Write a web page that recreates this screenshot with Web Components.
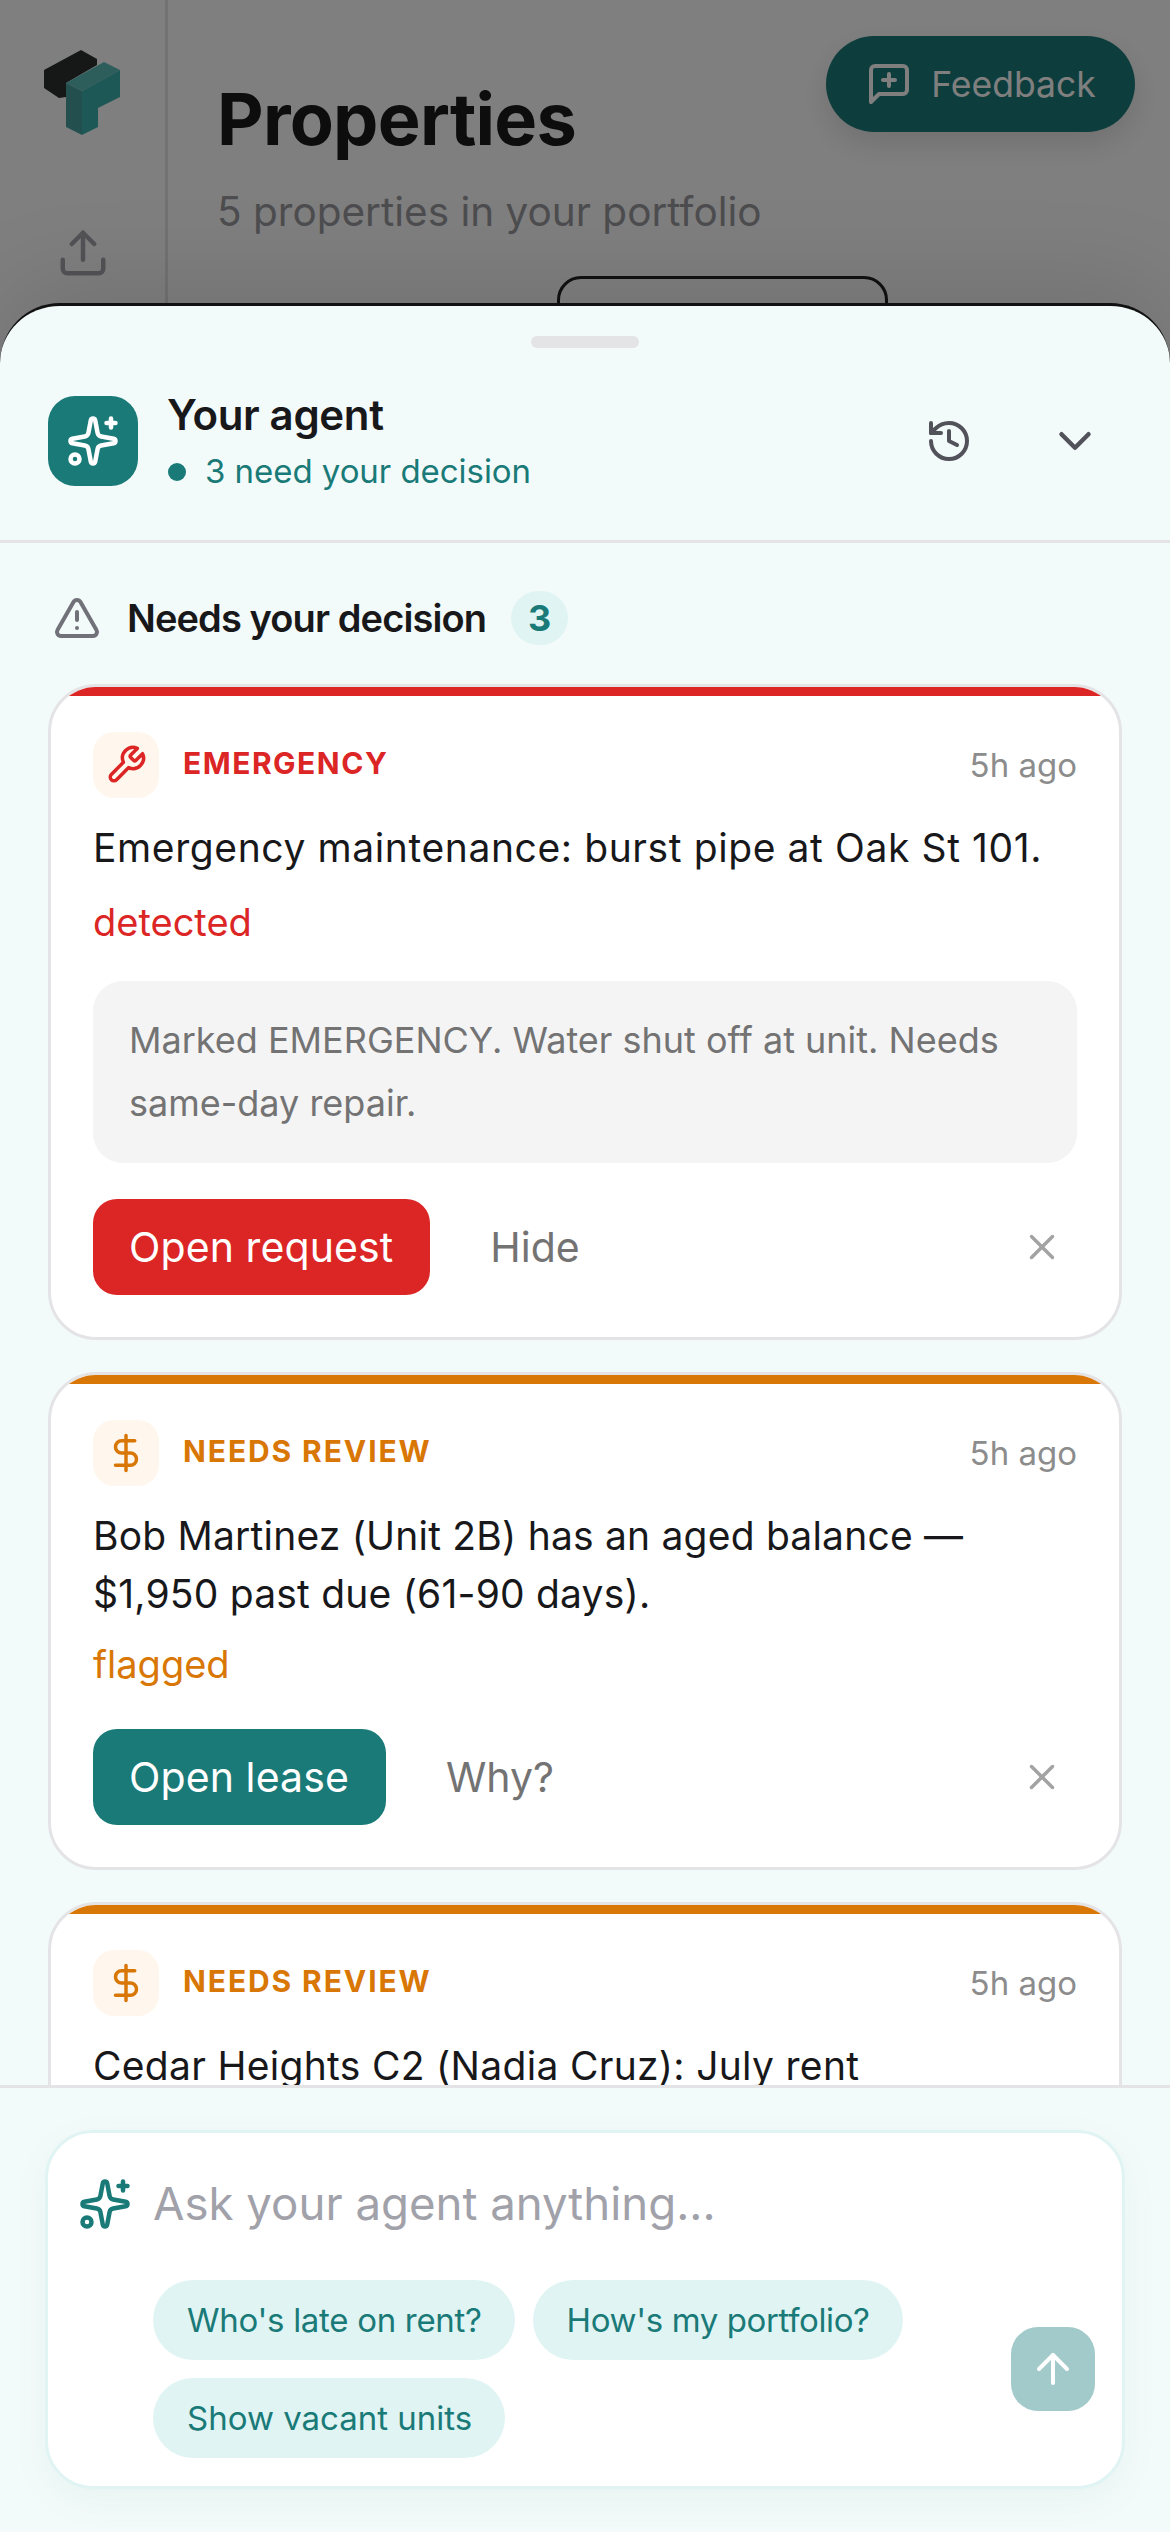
<!DOCTYPE html>
<html lang="en">
<head>
<meta charset="utf-8">
<title>Properties</title>
<style>
    html, body { margin: 0; height: 2532px; overflow: hidden; background: #fff; }
    body { position: relative; font-family: Inter, "Liberation Sans", sans-serif; }
</style>
</head>
<body>
<property-page></property-page>
<agent-sheet>
    <sheet-header slot="header"></sheet-header>
    <section-head slot="body" count="3">Needs your decision</section-head>
    <decision-card slot="body" style="--ls:.6px;--lab:1.5px" tone="red" icon="wrench" label="EMERGENCY" time="5h ago" tag="detected" action="Open request" alt="Hide" note="Marked EMERGENCY. Water shut off at unit. Needs same-day repair.">Emergency maintenance: burst pipe at Oak St 101.</decision-card>
    <decision-card slot="body" style="--ls:.2px;--lab:1.9px" tone="orange" icon="dollar" label="NEEDS REVIEW" time="5h ago" tag="flagged" action="Open lease" alt="Why?">Bob Martinez (Unit 2B) has an aged balance — $1,950 past due (61-90 days).</decision-card>
    <decision-card slot="body" style="--ls:.3px;--lab:1.9px" tone="orange" icon="dollar" label="NEEDS REVIEW" time="5h ago">Cedar Heights C2 (Nadia Cruz): July rent</decision-card>
    <agent-composer slot="footer"></agent-composer>
</agent-sheet>

<script>
const ICONS = {
    sparkles: '<path d="M11.017 2.814a1 1 0 0 1 1.966 0l1.051 5.558a2 2 0 0 0 1.594 1.594l5.558 1.051a1 1 0 0 1 0 1.966l-5.558 1.051a2 2 0 0 0-1.594 1.594l-1.051 5.558a1 1 0 0 1-1.966 0l-1.051-5.558a2 2 0 0 0-1.594-1.594l-5.558-1.051a1 1 0 0 1 0-1.966l5.558-1.051a2 2 0 0 0 1.594-1.594z"/><path d="M20 2v4"/><path d="M22 4h-4"/><circle cx="4" cy="20" r="2"/>',
    history: '<path d="M3 12a9 9 0 1 0 9-9 9.75 9.75 0 0 0-6.74 2.74L3 8"/><path d="M3 3v5h5"/><path d="M12 7v5l4 2"/>',
    chevron: '<path d="m6 9 6 6 6-6"/>',
    alert: '<path d="m21.73 18-8-14a2 2 0 0 0-3.48 0l-8 14A2 2 0 0 0 4 21h16a2 2 0 0 0 1.73-3"/><path d="M12 9v4"/><path d="M12 17h.01"/>',
    wrench: '<path d="M14.7 6.3a1 1 0 0 0 0 1.4l1.6 1.6a1 1 0 0 0 1.4 0l3.77-3.77a6 6 0 0 1-7.94 7.94l-6.91 6.91a2.12 2.12 0 0 1-3-3l6.91-6.91a6 6 0 0 1 7.94-7.94l-3.76 3.76z"/>',
    dollar: '<path d="M12 2v20"/><path d="M17 5H9.5a3.5 3.5 0 0 0 0 7h5a3.5 3.5 0 0 1 0 7H6"/>',
    x: '<path d="M18 6 6 18"/><path d="m6 6 12 12"/>',
    up: '<path d="m5 12 7-7 7 7"/><path d="M12 19V5"/>',
    upload: '<path d="M12 3v12"/><path d="m17 8-5-5-5 5"/><path d="M21 15v4a2 2 0 0 1-2 2H5a2 2 0 0 1-2-2v-4"/>',
    feedback: '<path d="M21 15a2 2 0 0 1-2 2H7l-4 4V5a2 2 0 0 1 2-2h14a2 2 0 0 1 2 2z"/><path d="M12 7v6"/><path d="M9 10h6"/>'
};

function icon(name, size, color) {
    return `<svg width="${size}" height="${size}" viewBox="0 0 24 24" fill="none" stroke="${color}" stroke-width="2" stroke-linecap="round" stroke-linejoin="round" style="display:block;flex:none">${ICONS[name]}</svg>`;
}

class PropertyPage extends HTMLElement {
    constructor() {
        super();
        this.attachShadow({ mode: 'open' });
    }
    connectedCallback() {
        this.shadowRoot.innerHTML = `
            <style>
                :host { display: flex; height: 2532px; background: #fff; position: relative; color: #1a1a1a; }
                .rail { width: 165px; height: 303px; border-right: 3px solid #e4e4e7; display: flex; flex-direction: column; align-items: center; flex: none; }
                .logo { margin-top: 50px; display: block; }
                .rail .up { margin-top: 90px; }
                main { flex: 1; padding: 72px 0 0 49px; }
                h1 { margin: 0; font-size: 72px; line-height: 93px; font-weight: 700; letter-spacing: -.75px; color: #1a1a1a; }
                p { margin: 20px 0 0; font-size: 40.5px; line-height: 54px; color: #9a9aa0; }
                .outline { margin: 37px 0 0 340px; width: 325px; height: 200px; border: 3px solid #222; border-radius: 24px; }
                .feedback { position: absolute; left: 826px; top: 36px; width: 309px; height: 96px; border-radius: 48px; background: #1a7a78; color: #fff; display: flex; align-items: center; justify-content: center; gap: 18px; font-size: 35.5px; box-shadow: 0 12px 30px rgba(0,0,0,.12); }
                .scrim { position: absolute; inset: 0; background: rgba(0,0,0,.5); }
            </style>
            <div class="rail">
                <svg class="logo" width="78" height="86" viewBox="46 50 78 86">
                    <polygon points="46,70 83,50 99,59 99,65 68,83 68,97 61,98 46,88" fill="#2c3030"/>
                    <polygon points="68,83 106,62 122,70 84,91" fill="#5cbdb9"/>
                    <polygon points="68,83 84,91 84,135 68,127" fill="#46a09c"/>
                    <polygon points="84,91 122,70 122,97 100,108 100,127 84,135" fill="#3cb0ac"/>
                </svg>
                <div class="up">${icon('upload', 54, '#a6a6ae')}</div>
            </div>
            <main>
                <h1>Properties</h1>
                <p>5 properties in your portfolio</p>
                <div class="outline"></div>
            </main>
            <div class="feedback">${icon('feedback', 48, '#fff')}<span>Feedback</span></div>
            <div class="scrim"></div>
        `;
    }
}

class AgentSheet extends HTMLElement {
    constructor() {
        super();
        this.attachShadow({ mode: 'open' });
    }
    connectedCallback() {
        this.shadowRoot.innerHTML = `
            <style>
                :host { position: absolute; left: 0; right: 0; top: 303px; bottom: 0; display: flex; flex-direction: column; background: #f3fbfa; border-top: 3px solid #111; border-radius: 60px 60px 0 0; box-shadow: 0 -24px 90px rgba(0,0,0,.1); }
                .handle { width: 108px; height: 12px; border-radius: 6px; background: #e4e4e7; margin: 30px auto 0; flex: none; }
                .body { flex: 1; min-height: 0; overflow: hidden; padding: 48px 48px 0; display: flex; flex-direction: column; gap: 32px; }
            </style>
            <div class="handle"></div>
            <slot name="header"></slot>
            <div class="body"><slot name="body"></slot></div>
            <slot name="footer"></slot>
        `;
    }
}

class SheetHeader extends HTMLElement {
    constructor() {
        super();
        this.attachShadow({ mode: 'open' });
    }
    connectedCallback() {
        this.shadowRoot.innerHTML = `
            <style>
                :host { display: flex; align-items: center; flex: none; padding: 40px 68px 46px 48px; border-bottom: 3px solid #e4e4e7; color: #18181b; }
                .mark { width: 90px; height: 90px; border-radius: 27px; background: #1a7a78; display: flex; align-items: center; justify-content: center; flex: none; }
                .title { margin-left: 30px; flex: 1; }
                .name { font-size: 42px; line-height: 54px; font-weight: 600; letter-spacing: -.35px; margin-left: -1px; }
                .status { display: flex; align-items: center; gap: 19px; font-size: 33px; line-height: 45px; letter-spacing: -.05px; color: #1a7a78; margin-top: 7px; }
                .dot { width: 18px; height: 18px; border-radius: 50%; background: #1a7a78; }
                .tools { display: flex; align-items: center; gap: 75px; }
            </style>
            <div class="mark">${icon('sparkles', 54, '#fff')}</div>
            <div class="title">
                <div class="name">Your agent</div>
                <div class="status"><span class="dot"></span><span>3 need your decision</span></div>
            </div>
            <div class="tools">${icon('history', 48, '#52525b')}${icon('chevron', 54, '#52525b')}</div>
        `;
    }
}

class SectionHead extends HTMLElement {
    constructor() {
        super();
        this.attachShadow({ mode: 'open' });
    }
    connectedCallback() {
        this.shadowRoot.innerHTML = `
            <style>
                :host { display: flex; align-items: center; flex: none; height: 54px; margin-bottom: 7px; padding-left: 5px; color: #18181b; font-size: 38px; font-weight: 600; letter-spacing: -.9px; }
                .text { margin-left: 26px; }
                .count { margin-left: 25px; width: 57px; height: 54px; border-radius: 27px; background: #e0f4f3; color: #1a7a78; font-size: 36px; font-weight: 700; letter-spacing: 0; display: flex; align-items: center; justify-content: center; }
            </style>
            ${icon('alert', 48, '#71717a')}
            <span class="text"><slot></slot></span>
            <span class="count">${this.getAttribute('count')}</span>
        `;
    }
}

class DecisionCard extends HTMLElement {
    constructor() {
        super();
        this.attachShadow({ mode: 'open' });
    }
    connectedCallback() {
        const red = this.getAttribute('tone') === 'red';
        const tone = red ? '#dc2626' : '#d97706';
        const tag = this.getAttribute('tag');
        const note = this.getAttribute('note');
        const action = this.getAttribute('action');
        this.shadowRoot.innerHTML = `
            <style>
                :host { display: block; flex: none; background: #fff; border: 3px solid #e4e4e7; border-radius: 48px; overflow: hidden; color: #18181b; }
                .bar { height: 9px; background: ${tone}; }
                .inner { padding: 36px 42px 42px; }
                .top { display: flex; align-items: center; }
                .badge { width: 66px; height: 66px; border-radius: 21px; background: #fff7ed; display: flex; align-items: center; justify-content: center; flex: none; }
                .label { margin: 0 0 4px 24px; flex: 1; font-size: 30px; font-weight: 700; letter-spacing: var(--lab, 1.5px); color: ${tone}; }
                .time { font-size: 33px; color: #8c8c8c; }
                .text { margin-top: 21px; font-size: 39px; line-height: 58px; letter-spacing: var(--ls, 0); }
                .tag { margin-top: ${note ? 21 : 17}px; font-size: 38px; line-height: 48px; color: ${tone}; }
                .note { margin-top: 35px; padding: 28px 36px; border-radius: 30px; background: #f4f4f5; font-size: 36px; line-height: 63px; color: #737373; }
                .actions { margin-top: ${note ? 36 : 41}px; display: flex; align-items: center; }
                .primary { height: 96px; padding: 0 37px 0 36px; border-radius: 24px; background: ${red ? '#dc2626' : '#1a7a78'}; color: #fff; font-size: 41px; letter-spacing: .1px; display: flex; align-items: center; }
                .alt { margin-left: 60px; flex: 1; font-size: 41px; color: #737373; }
                .actions svg { margin-right: 14px; }
            </style>
            <div class="bar"></div>
            <div class="inner">
                <div class="top">
                    <span class="badge">${icon(this.getAttribute('icon'), 42, tone)}</span>
                    <span class="label">${this.getAttribute('label')}</span>
                    <span class="time">${this.getAttribute('time')}</span>
                </div>
                <div class="text"><slot></slot></div>
                ${tag ? `<div class="tag">${tag}</div>` : ''}
                ${note ? `<div class="note">${note}</div>` : ''}
                ${action ? `<div class="actions">
                    <span class="primary">${action}</span>
                    <span class="alt">${this.getAttribute('alt')}</span>
                    ${icon('x', 42, '#a3a3a3')}
                </div>` : ''}
            </div>
        `;
    }
}

class AgentComposer extends HTMLElement {
    constructor() {
        super();
        this.attachShadow({ mode: 'open' });
    }
    connectedCallback() {
        this.shadowRoot.innerHTML = `
            <style>
                :host { display: block; flex: none; padding: 42px 45px 43px; background: #f3fbfa; border-top: 3px solid #e4e4e7; position: relative; }
                .box { background: #fff; border: 3px solid #e0f4f3; border-radius: 48px; padding: 35px 27px 28px 30px; box-shadow: 0 12px 36px rgba(26,122,120,.06); }
                .ask { display: flex; align-items: center; gap: 21px; font-size: 45.6px; line-height: 72px; color: #a1a1aa; }
                .row { margin-top: 40px; padding-left: 75px; display: flex; align-items: center; }
                .pills { flex: 1; display: flex; flex-wrap: wrap; gap: 18px; }
                .pill { height: 80px; padding: 0 33px 0 34px; border-radius: 40px; background: #e0f4f3; color: #1a7a78; font-size: 33px; display: flex; align-items: center; }
                .send { width: 84px; height: 84px; border-radius: 27px; background: #a3caca; display: flex; align-items: center; justify-content: center; flex: none; }
            </style>
            <div class="box">
                <div class="ask">${icon('sparkles', 54, '#1a7a78')}<span>Ask your agent anything...</span></div>
                <div class="row">
                    <div class="pills">
                        <span class="pill" style="letter-spacing:-.3px">Who's late on rent?</span>
                        <span class="pill" style="letter-spacing:-.38px">How's my portfolio?</span>
                        <span class="pill">Show vacant units</span>
                    </div>
                    <div class="send">${icon('up', 48, '#fff')}</div>
                </div>
            </div>
        `;
    }
}

customElements.define('property-page', PropertyPage);
customElements.define('agent-sheet', AgentSheet);
customElements.define('sheet-header', SheetHeader);
customElements.define('section-head', SectionHead);
customElements.define('decision-card', DecisionCard);
customElements.define('agent-composer', AgentComposer);
</script>
</body>
</html>
